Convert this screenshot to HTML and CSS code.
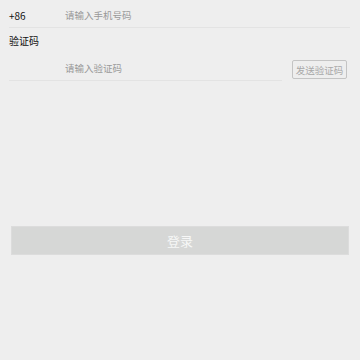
FILE: index.html
```html
<!DOCTYPE html>
<html lang="zh-CN">
<head>
    <meta charset="UTF-8">
    <meta name="viewport" content="width=device-width, initial-scale=1.0">
    <title>登录</title>
    <link rel="stylesheet" href="styles.css">
</head>
<body>
<div class="form">
    <div class="row phone-row">
        <span class="prefix">+86</span>
        <input class="input" type="text" placeholder="请输入手机号码">
    </div>

    <div class="label">验证码</div>

    <div class="code-row">
        <div class="code-field">
            <span class="prefix"></span>
            <input class="input" type="text" placeholder="请输入验证码">
        </div>
        <button class="send" type="button">发送验证码</button>
    </div>

    <button class="submit" type="button">登录</button>
</div>
</body>
</html>
```

FILE: styles.css
```css
body {
    margin: 0;
    background-color: #eeeeee;
    font-family: "Noto Sans CJK SC", "Noto Sans", sans-serif;
}

.form {
    padding: 0 10px 0 9px;
}

.row {
    display: flex;
    align-items: center;
    height: 24px;
    padding-top: 3px;
    border-bottom: 1px solid #e3e3e3;
}

.prefix {
    width: 56px;
    flex-shrink: 0;
    font-size: 10px;
    color: #111;
}

.input {
    flex: 1;
    min-width: 0;
    border: 0;
    outline: 0;
    padding: 0;
    background: transparent;
    font-family: inherit;
    font-size: 9.5px;
    color: #333;
}

.input::placeholder {
    color: #999;
}

.label {
    height: 28px;
    line-height: 26px;
    font-size: 10px;
    color: #111;
}

.code-row {
    display: flex;
    align-items: flex-end;
}

.code-field {
    flex: 1;
    display: flex;
    align-items: center;
    height: 23px;
    padding-bottom: 1px;
    border-bottom: 1px solid #e3e3e3;
}

.send {
    margin: 0 3px 2px 10px;
    width: 55px;
    height: 19px;
    padding: 0;
    border: 1px solid #c4c4c4;
    border-radius: 2px;
    background: transparent;
    font-family: inherit;
    font-size: 9.5px;
    color: #a8a8a8;
}

.submit {
    display: block;
    width: calc(100% - 3px);
    height: 29px;
    margin: 145px 0 0 2px;
    border: 1px solid #dcdcdc;
    background-color: #d6d7d6;
    font-family: inherit;
    font-size: 13px;
    color: #f7f7f7;
}
```
